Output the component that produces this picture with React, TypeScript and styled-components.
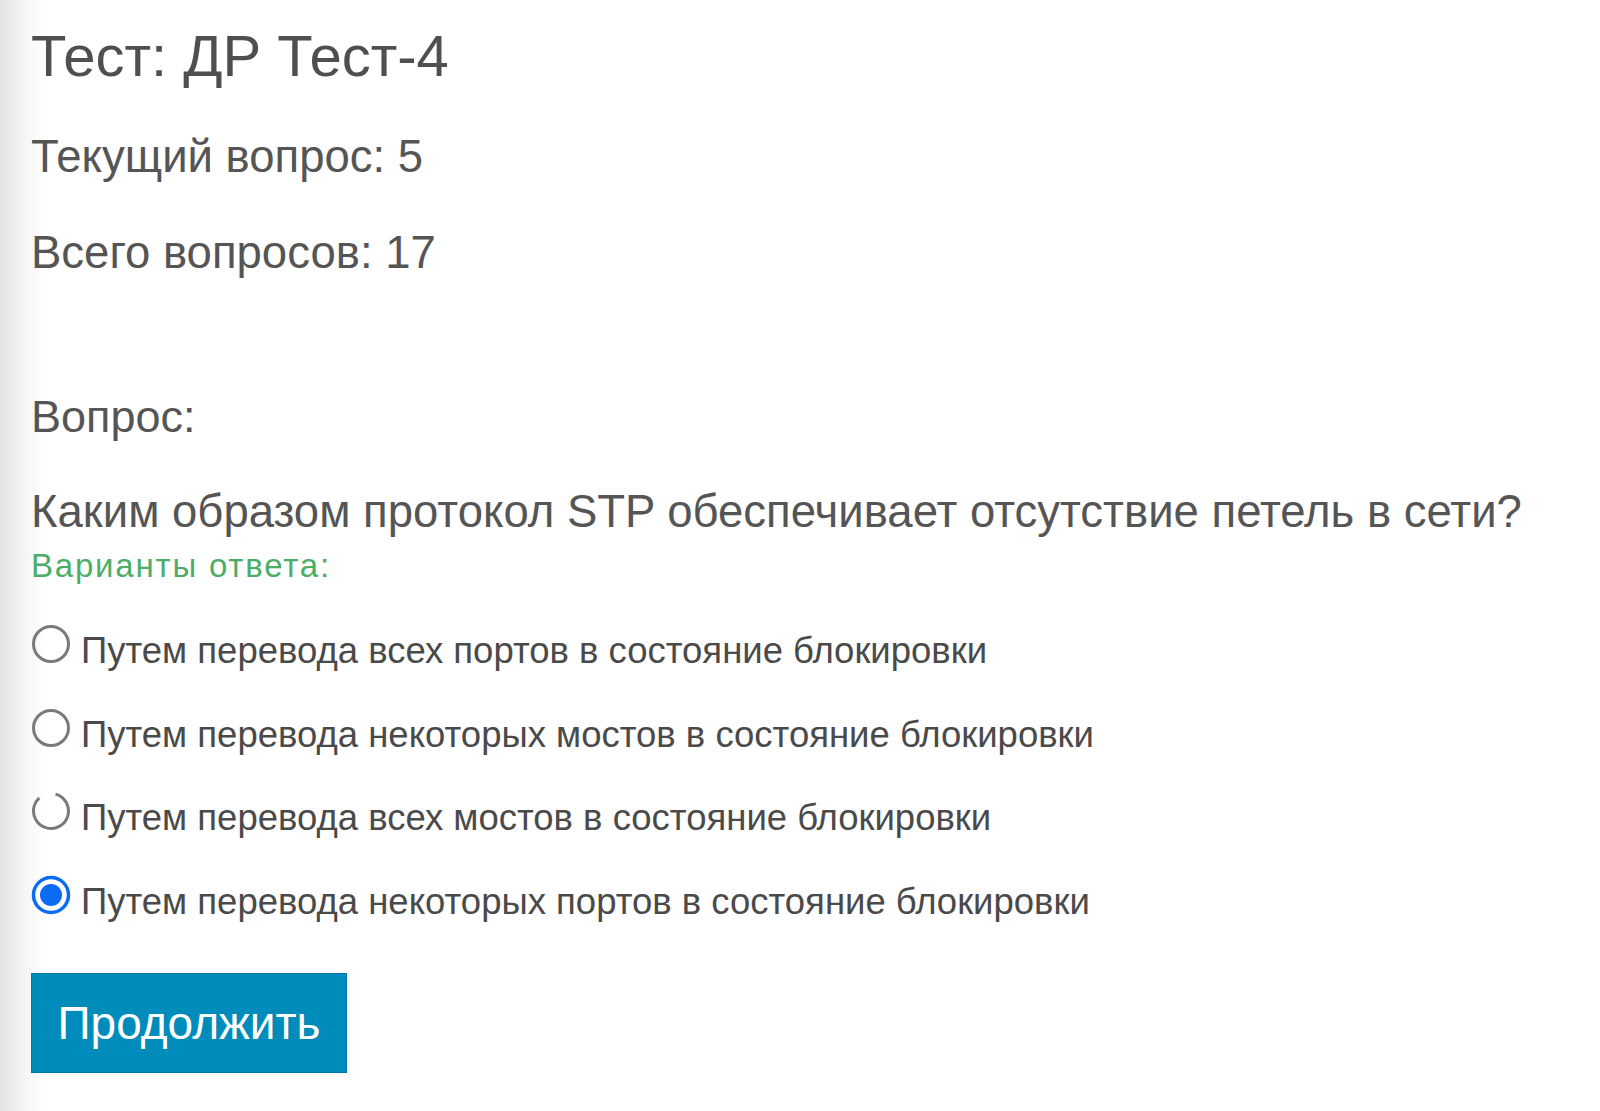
import React, { useState } from 'react'
import styled, { createGlobalStyle } from 'styled-components'

const options = [
  'Путем перевода всех портов в состояние блокировки',
  'Путем перевода некоторых мостов в состояние блокировки',
  'Путем перевода всех мостов в состояние блокировки',
  'Путем перевода некоторых портов в состояние блокировки',
]

function RadioMark({ checked, broken }: { checked: boolean; broken?: boolean }) {
  if (checked) {
    return (
      <RadioSvg viewBox="0 0 40 40">
        <circle cx="20" cy="20" r="17.5" fill="#fff" stroke="#0a6cf5" strokeWidth="3.5" />
        <circle cx="20" cy="20" r="11" fill="#0a6cf5" />
      </RadioSvg>
    )
  }
  return (
    <RadioSvg viewBox="0 0 40 40">
      <circle
        cx="20"
        cy="20"
        r="17.5"
        fill="none"
        stroke="#7a7a7a"
        strokeWidth="3"
        strokeDasharray={broken ? '92 18' : undefined}
        transform={broken ? 'rotate(-75 20 20)' : undefined}
      />
    </RadioSvg>
  )
}

export default function App() {
  const [selected, setSelected] = useState(3)

  return (
    <>
      <GlobalStyle />
      <Page>
        <Title>Тест: ДР Тест-4</Title>
        <Info>Текущий вопрос: 5</Info>
        <Info>Всего вопросов: 17</Info>
        <Label>Вопрос:</Label>
        <Question>Каким образом протокол STP обеспечивает отсутствие петель в сети?</Question>
        <Hint>Варианты ответа:</Hint>
        <OptionList>
          {options.map((text, i) => (
            <Option key={i} onClick={() => setSelected(i)}>
              <RadioMark checked={selected === i} broken={i === 2 && selected !== i} />
              <OptionText>{text}</OptionText>
            </Option>
          ))}
        </OptionList>
        <Button>Продолжить</Button>
      </Page>
    </>
  )
}

/*---> Styles <---*/
const GlobalStyle = createGlobalStyle`
  html, body {
    margin: 0;
    padding: 0;
  }
  body {
    min-height: 1111px;
    background: linear-gradient(to right, #e2e2e2 0px, #f4f4f4 22px, #ffffff 45px);
    font-family: "Liberation Sans", Arial, sans-serif;
    color: #555555;
  }
`

const Page = styled.div`
  display: flex;
  flex-direction: column;
  align-items: flex-start;
  padding: 21px 0 0 31px;
`

const Title = styled.h1`
  margin: 0;
  font-size: 58px;
  line-height: 70px;
  font-weight: normal;
  color: #4f4f4f;
`

const Info = styled.p`
  margin: 36px 0 0;
  font-size: 45.5px;
  line-height: 60px;
`

const Label = styled(Info)`
  margin-top: 104px;
  font-size: 45px;
`

const Question = styled.p`
  margin: 37px 0 0;
  font-size: 45.5px;
  line-height: 56px;
  white-space: nowrap;
`

const Hint = styled.div`
  margin-top: 6px;
  font-size: 33px;
  line-height: 40px;
  letter-spacing: 1.8px;
  color: #4cae66;
`

const OptionList = styled.div`
  display: flex;
  flex-direction: column;
  gap: 36.5px;
  margin-top: 38px;
`

const Option = styled.label`
  display: flex;
  align-items: flex-start;
  gap: 10px;
  cursor: pointer;
`

const RadioSvg = styled.svg`
  width: 40px;
  height: 40px;
  flex-shrink: 0;
`

const OptionText = styled.span`
  margin-top: 7px;
  font-size: 36.5px;
  line-height: 40px;
  color: #4a4a4a;
`

const Button = styled.button`
  margin-top: 51px;
  width: 316px;
  height: 100px;
  border: 1px solid #0079a8;
  background: #008cba;
  color: #ffffff;
  font-family: "Liberation Sans", Arial, sans-serif;
  font-size: 46px;
  cursor: pointer;
`
